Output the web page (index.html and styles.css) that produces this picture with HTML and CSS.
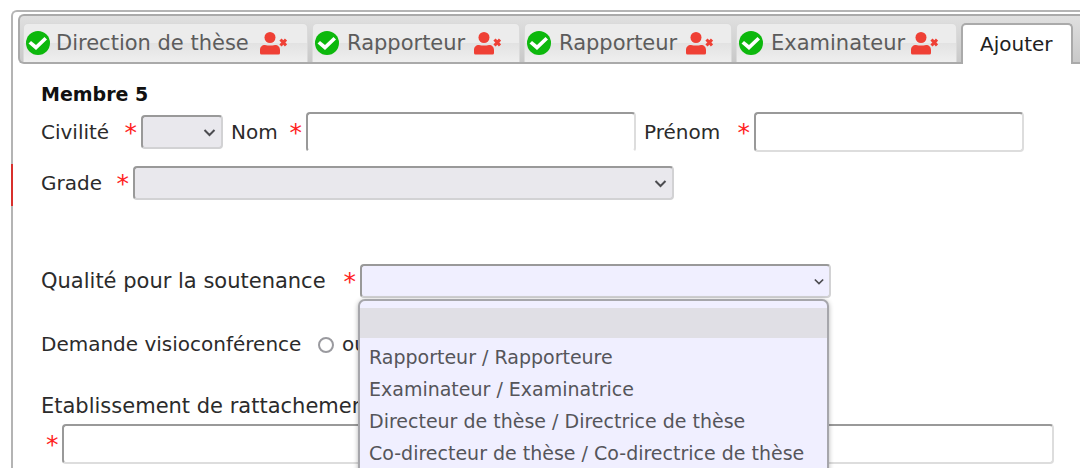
FILE: index.html
```html
<!doctype html>
<html lang="fr">
  <head>
    <meta charset="UTF-8" />
    <meta name="viewport" content="width=device-width, initial-scale=1.0" />
    <title>Membres du jury</title>
    <link rel="stylesheet" href="styles.css">
  </head>

  <body>
    <svg width="0" height="0" class="sprite">
      <symbol id="check" viewBox="0 0 24 24">
        <circle cx="12" cy="12" r="12" fill="#0db80d" />
        <path d="M2.500 12.500L5 10l5 4 8.500-8 2.500 2.500L10 19z" fill="#fff" />
      </symbol>
      <symbol id="user-remove" viewBox="0 0 27 23">
        <circle cx="10" cy="5.500" r="5.500" fill="#ef4035" />
        <path d="M0 21v-3c0-3 2-5 5-5q5 1 10 0c3 0 5 2 5 5v3q0 1.500-1.500 1.500h-17Q0 22.500 0 21z" fill="#ef4035" />
        <path d="M20.500 7.500l5.500 6M26 7.500l-5.500 6" stroke="#ef4035" stroke-width="3" />
      </symbol>
      <symbol id="chevron" viewBox="0 0 12 8">
        <path d="M1 1l5 5 5-5" fill="none" stroke="#4c4c50" stroke-width="2" />
      </symbol>
    </svg>

    <div class="panel">
      <nav class="tabs">
        <a href="#m1" class="tab tab-direction">
          <svg class="icon-check"><use href="#check" /></svg>
          <span>Direction de thèse</span>
          <svg class="icon-user"><use href="#user-remove" /></svg>
        </a>
        <a href="#m2" class="tab tab-rapporteur">
          <svg class="icon-check"><use href="#check" /></svg>
          <span>Rapporteur</span>
          <svg class="icon-user"><use href="#user-remove" /></svg>
        </a>
        <a href="#m3" class="tab tab-rapporteur">
          <svg class="icon-check"><use href="#check" /></svg>
          <span>Rapporteur</span>
          <svg class="icon-user"><use href="#user-remove" /></svg>
        </a>
        <a href="#m4" class="tab tab-examinateur">
          <svg class="icon-check"><use href="#check" /></svg>
          <span>Examinateur</span>
          <svg class="icon-user"><use href="#user-remove" /></svg>
        </a>
        <a href="#ajouter" class="tab tab-active"><span>Ajouter</span></a>
      </nav>

      <form class="member-form">
        <h2>Membre 5</h2>

        <div class="row row-identity">
          <label for="civilite">Civilité <span class="required">*</span></label>
          <div class="select-box">
            <select id="civilite"><option></option></select>
            <svg class="chevron"><use href="#chevron" /></svg>
          </div>
          <label for="nom">Nom <span class="required">*</span></label>
          <input type="text" id="nom" class="input-open" />
          <label for="prenom">Prénom <span class="required">*</span></label>
          <input type="text" id="prenom" />
        </div>

        <div class="row row-grade">
          <label for="grade">Grade <span class="required">*</span></label>
          <div class="select-box">
            <select id="grade"><option></option></select>
            <svg class="chevron"><use href="#chevron" /></svg>
          </div>
        </div>

        <div class="row row-quality">
          <label for="qualite">Qualité pour la soutenance <span class="required">*</span></label>
          <div class="select-box">
            <select id="qualite" class="select-open"><option></option></select>
            <svg class="chevron"><use href="#chevron" /></svg>
            <ul class="options" role="listbox">
              <li class="selected" role="option"></li>
              <li role="option">Rapporteur / Rapporteure</li>
              <li role="option">Examinateur / Examinatrice</li>
              <li role="option">Directeur de thèse / Directrice de thèse</li>
              <li role="option">Co-directeur de thèse / Co-directrice de thèse</li>
            </ul>
          </div>
        </div>

        <div class="row row-visio">
          <label for="visio">Demande visioconférence</label>
          <input type="radio" name="visio" id="visio" />
          <span>ou</span>
        </div>

        <div class="row row-school">
          <label for="etablissement">Etablissement de rattachement</label>
        </div>
        <div class="row row-school-field">
          <span class="required">*</span>
          <input type="text" id="etablissement" />
        </div>
      </form>
    </div>
  </body>
</html>
```

FILE: styles.css
```css
* {
  box-sizing: border-box;
}

body {
  margin: 0;
  padding: 10px 0 0 11px;
  overflow: hidden;
  background: #fff;
  color: #2b2b2b;
  font-family: Verdana, 'DejaVu Sans', sans-serif;
  font-size: 20px;
  line-height: 24px;
}

.sprite {
  position: absolute;
}

.panel {
  min-height: calc(100vh - 10px);
  padding: 2px 0 0 5px;
  border: 2px solid #b4b4b4;
  border-bottom: none;
  border-right: none;
  border-radius: 6px 0 0 0;
}

/* tabs */
.tabs {
  display: flex;
  gap: 4px;
  padding: 7px 0 0 3px;
  border: 2px solid #aaa;
  border-right: none;
  border-radius: 6px 0 0 6px;
  background: linear-gradient(#e0e0e0, #c9c9c9);
}

.tab {
  display: flex;
  flex: none;
  align-items: center;
  height: 39px;
  padding: 0 2px;
  border: 1px solid #dadada;
  border-bottom: none;
  border-radius: 5px 5px 0 0;
  background: linear-gradient(#ececec 50%, #e2e2e2 50%, #efefef);
  color: #5c5c5c;
  font-size: 21px;
  text-decoration: none;
  white-space: nowrap;
}

.tab span {
  flex: 1;
  margin-left: 6px;
}

.tab-direction {
  width: 285px;
  padding-right: 20px;
}

.tab-rapporteur {
  width: 208px;
  padding-right: 18px;
}

.tab-rapporteur span,
.tab-examinateur span {
  margin-left: 8px;
}

.tab-examinateur {
  width: 221px;
  padding-right: 18px;
}

.tab-active {
  height: 41px;
  margin-bottom: -2px;
  padding: 0 18px 2px 11px;
  border: 2px solid #aaa;
  border-bottom: none;
  background: #fff;
  color: #212121;
  font-size: 20px;
}

.icon-check {
  flex: none;
  width: 24px;
  height: 24px;
}

.icon-user {
  flex: none;
  width: 27px;
  height: 23px;
}

/* form */
.member-form {
  padding: 18px 26px 0 23px;
}

h2 {
  margin: 0;
  color: #111;
  font-size: 19px;
  line-height: 24px;
}

.row {
  display: flex;
  align-items: center;
}

label {
  display: flex;
  flex: none;
  align-items: center;
  justify-content: space-between;
  padding-right: 4px;
  white-space: nowrap;
}

.required {
  height: 24px;
  padding-top: 1px;
  color: #f22;
  font-size: 25px;
  line-height: 24px;
}

input[type='text'] {
  flex: 1;
  min-width: 0;
  height: 40px;
  border: 2px solid #999;
  border-right-color: #ddd;
  border-bottom-color: #ddd;
  border-radius: 4px;
  background: #fff;
  font: inherit;
}

input.input-open {
  border-bottom-color: transparent;
}

.select-box {
  position: relative;
  height: 34px;
}

select {
  display: block;
  width: 100%;
  height: 100%;
  border: 2px solid #999;
  border-right-color: #d2d2d4;
  border-bottom-color: #d2d2d4;
  border-radius: 4px;
  background: #e9e8ed;
  font: inherit;
  appearance: none;
}

.chevron {
  position: absolute;
  top: 14px;
  right: 7px;
  width: 13px;
  height: 8px;
  pointer-events: none;
}

.row-identity {
  display: grid;
  grid-template-columns: 100px 82px 83px 11fr 118px 9fr;
  margin-top: 6px;
  padding-right: 30px;
}

.row-identity label:not(:first-child) {
  padding-left: 8px;
}

.row-grade {
  position: relative;
  margin-top: 14px;
}

.row-grade label {
  width: 92px;
}

.row-grade .select-box {
  width: 541px;
}

/* error mark on the panel edge */
.row-grade::before {
  content: '';
  position: absolute;
  top: -2px;
  left: -30px;
  width: 2px;
  height: 42px;
  background: #d8302c;
}

.row-quality {
  margin-top: 64px;
  font-size: 21px;
}

.row-quality label {
  width: 319px;
}

.row-quality .select-box {
  width: 471px;
}

.row-quality .chevron {
  width: 10px;
}

select.select-open {
  background: #f0efff;
}

.options {
  position: absolute;
  top: 35px;
  left: -2px;
  z-index: 1;
  width: 100%;
  margin: 0;
  padding: 7px 0;
  border: 2px solid #a6a6ab;
  border-radius: 7px;
  background: #f0efff;
  box-shadow: 0 1px 5px rgba(0, 0, 0, 0.3);
  color: #55555a;
  font-size: 19px;
  line-height: 32px;
  list-style: none;
}

.options li {
  padding-left: 9px;
  white-space: nowrap;
}

.options .selected {
  height: 30px;
  margin-bottom: 3px;
  background: #e0dfe5;
}

.row-visio {
  margin-top: 34px;
}

.row-school {
  margin-top: 38px;
  font-size: 21px;
}

.row-visio label {
  width: 269px;
  padding-right: 0;
}

input[type='radio'] {
  width: 16px;
  height: 16px;
  margin: 2px 8px 0;
  border: 2px solid #9a9a9f;
  border-radius: 50%;
  background: #fff;
  appearance: none;
}

.row-school-field {
  margin-top: 6px;
  padding-left: 5px;
}

.row-school-field .required {
  width: 16px;
}
```
